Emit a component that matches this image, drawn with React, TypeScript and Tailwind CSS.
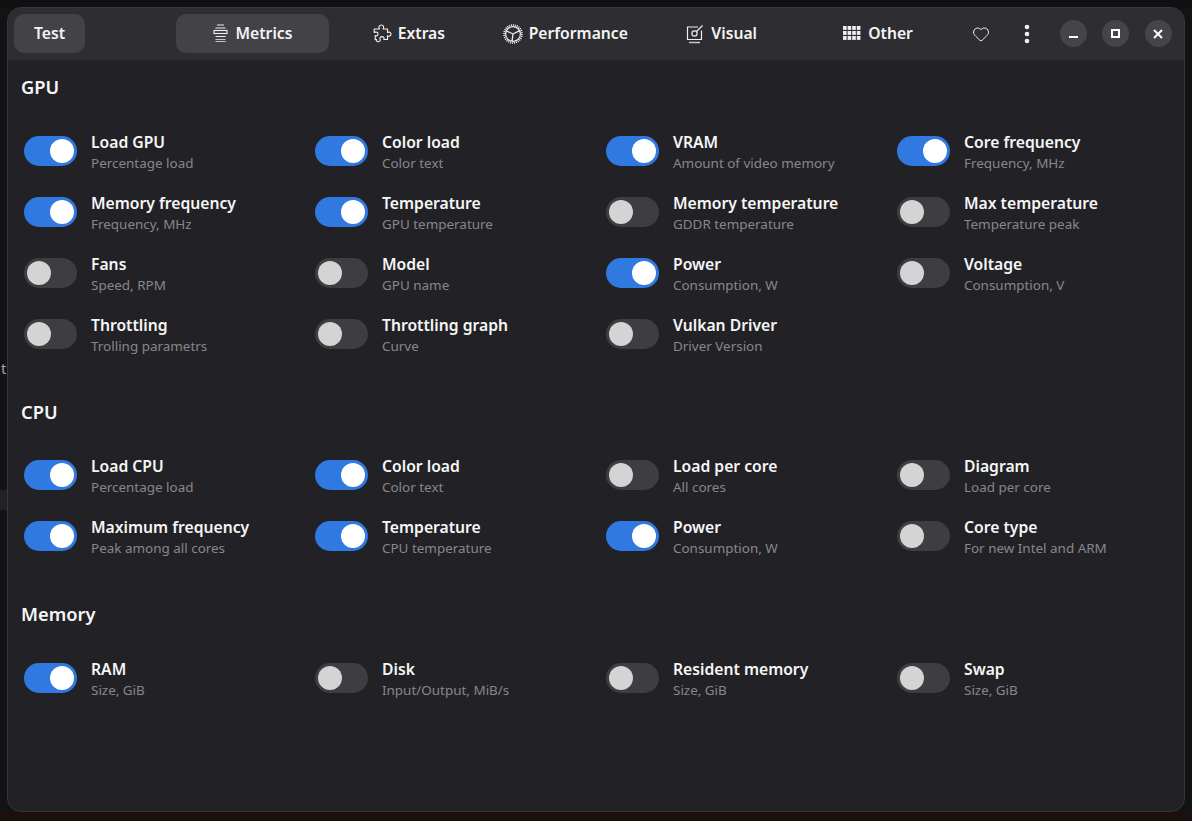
import { Heart } from "lucide-react";

type Item = { t: string; s: string; on?: boolean };

const gpu: Item[] = [
  { t: "Load GPU", s: "Percentage load", on: true },
  { t: "Color load", s: "Color text", on: true },
  { t: "VRAM", s: "Amount of video memory", on: true },
  { t: "Core frequency", s: "Frequency, MHz", on: true },
  { t: "Memory frequency", s: "Frequency, MHz", on: true },
  { t: "Temperature", s: "GPU temperature", on: true },
  { t: "Memory temperature", s: "GDDR temperature" },
  { t: "Max temperature", s: "Temperature peak" },
  { t: "Fans", s: "Speed, RPM" },
  { t: "Model", s: "GPU name" },
  { t: "Power", s: "Consumption, W", on: true },
  { t: "Voltage", s: "Consumption, V" },
  { t: "Throttling", s: "Trolling parametrs" },
  { t: "Throttling graph", s: "Curve" },
  { t: "Vulkan Driver", s: "Driver Version" },
];
const cpu: Item[] = [
  { t: "Load CPU", s: "Percentage load", on: true },
  { t: "Color load", s: "Color text", on: true },
  { t: "Load per core", s: "All cores" },
  { t: "Diagram", s: "Load per core" },
  { t: "Maximum frequency", s: "Peak among all cores", on: true },
  { t: "Temperature", s: "CPU temperature", on: true },
  { t: "Power", s: "Consumption, W", on: true },
  { t: "Core type", s: "For new Intel and ARM" },
];
const memory: Item[] = [
  { t: "RAM", s: "Size, GiB", on: true },
  { t: "Disk", s: "Input/Output, MiB/s" },
  { t: "Resident memory", s: "Size, GiB" },
  { t: "Swap", s: "Size, GiB" },
];

function Toggle({ on }: { on?: boolean }) {
  return on ? (
    <div className="flex h-[30px] w-[53px] shrink-0 items-center justify-end rounded-full bg-[#3079e0] pr-[3px]">
      <div className="h-[24px] w-[24px] rounded-full bg-white" />
    </div>
  ) : (
    <div className="flex h-[30px] w-[53px] shrink-0 items-center rounded-full bg-[#3e3e42] pl-[3px]">
      <div className="h-[24px] w-[24px] rounded-full bg-[#d4d4d4]" />
    </div>
  );
}

function Row({ t, s, on }: Item) {
  return (
    <div className="flex h-[61px] items-center">
      <Toggle on={on} />
      <div className="ml-[14px] flex flex-col pt-[4px]">
        <div className="text-[15.7px] leading-[21px] font-semibold whitespace-nowrap text-[#f6f6f6]">{t}</div>
        <div className="text-[13.45px] leading-[21px] whitespace-nowrap text-[#87878a]">{s}</div>
      </div>
    </div>
  );
}

function Section({ title, items, className }: { title: string; items: Item[]; className: string }) {
  return (
    <section className={className}>
      <h2 className="pl-[13px] text-[18.3px] leading-[26px] font-semibold text-[#f6f6f6]">{title}</h2>
      <div className="mt-[20px] grid grid-cols-[291px_291px_291px_291px] pl-[16px]">
        {items.map((i, n) => (
          <Row key={n} {...i} />
        ))}
      </div>
    </section>
  );
}

function MetricsIcon() {
  return (
    <svg width="15" height="19" viewBox="0 0 15 19" fill="none" stroke="#eeeeee" strokeWidth="1.1">
      <path d="M4 1h7M2.5 4h10" />
      <rect x="1" y="6.5" width="13" height="3" />
      <path d="M2.5 12.5h10" />
      <path d="M2.5 15.5h10M2.5 17.5h10" strokeOpacity="0.75" />
    </svg>
  );
}

function PuzzleIcon() {
  return (
    <svg width="19" height="19" viewBox="0 0 19 19" fill="none" stroke="#f0f0f0" strokeWidth="1.15" strokeLinejoin="round">
      <path d="M6.5 5C5.3 3.2 6.2 1 8.3 1s3 2.2 1.8 4H14.5V8.6C16 7.6 18 8.3 18 10.2S16 12.8 14.5 11.8V15.5H10.8C11.6 14 10.6 12.6 9 12.6S6.4 14 7.2 15.5C7.6 17.2 6 18 4.6 17.6S2.8 16 3.6 15.5H2.2V11.6C3.6 12.4 5 11.6 5 10S3.6 7.6 1.2 8.4V5Z" />
    </svg>
  );
}

function PerfIcon() {
  return (
    <svg width="20" height="20" viewBox="0 0 20 20" fill="none" stroke="#f0f0f0">
      <circle cx="10" cy="10" r="9" strokeWidth="1.6" strokeDasharray="1.1 0.9" />
      <circle cx="10" cy="10" r="7.4" strokeWidth="1.2" />
      <path d="M10 10 3.6 7M10 10l6.6-3.4M10 10l-1 7.2" strokeWidth="1.3" />
    </svg>
  );
}

function VisualIcon() {
  return (
    <svg width="19" height="20" viewBox="0 0 19 20" fill="none" stroke="#eeeeee" strokeWidth="1.2">
      <path d="M12 3H1.5v12.5h14V6.5" />
      <circle cx="8.5" cy="9.5" r="2.6" />
      <path d="M10.5 7.5 16.5 1.5" />
      <path d="M3 18.5h11" strokeWidth="1.6" strokeOpacity="0.8" />
    </svg>
  );
}

function GridIcon() {
  const cells = [0, 1, 2, 3].flatMap((x) => [0, 1, 2].map((y) => [x, y]));
  return (
    <svg width="18" height="15" viewBox="0 0 18 15" fill="#f0f0f0">
      {cells.map(([x, y]) => (
        <rect key={`${x}-${y}`} x={x * 4.6} y={y * 5} width="3.6" height="3.9" />
      ))}
    </svg>
  );
}

function Tab({ icon, label, active, gap }: { icon: React.ReactNode; label: string; active?: boolean; gap: string }) {
  return (
    <div
      className={`flex h-[39px] w-[153px] items-center justify-center rounded-[10px] text-[15.7px] font-semibold text-[#f4f4f4] ${gap} ${
        active ? "bg-[#434347]" : ""
      }`}
    >
      {icon}
      <span>{label}</span>
    </div>
  );
}

function WinButton({ children }: { children: React.ReactNode }) {
  return (
    <div className="flex h-[27px] w-[27px] items-center justify-center rounded-full bg-[#454549]">{children}</div>
  );
}

export default function App() {
  return (
    <div
      className="relative h-[821px] w-[1192px] overflow-hidden bg-[#131316] p-[7px] pb-[9px]"
      style={{ fontFamily: '"Noto Sans", sans-serif' }}
    >
      <div className="absolute top-0 left-0 h-[7px] w-full bg-[#101011]" />
      <div className="absolute bottom-0 left-0 h-[9px] w-full bg-[#1c100e]" />
      <div className="absolute top-[357px] left-[1px] text-[15px] text-[#a0a0a4]">t</div>
      <div className="absolute top-[490px] left-0 h-[20px] w-[7px] bg-[#222226]" />

      <div className="relative flex h-[805px] flex-col overflow-hidden rounded-[14px] border border-[#38383c] bg-[#222226]">
        <header className="flex h-[52px] shrink-0 items-center bg-[#2e2e32] pb-[1px]">
          <div className="ml-[6px] flex h-[39px] w-[71px] items-center justify-center rounded-[10px] bg-[#434347] text-[15.7px] font-semibold text-[#f4f4f4]">
            Test
          </div>
          <div className="ml-[91px] flex gap-[3.4px]">
            <Tab active gap="gap-[8px]" icon={<MetricsIcon />} label="Metrics" />
            <Tab gap="gap-[6px]" icon={<PuzzleIcon />} label="Extras" />
            <Tab gap="gap-[6px]" icon={<PerfIcon />} label="Performance" />
            <Tab gap="gap-[6px]" icon={<VisualIcon />} label="Visual" />
            <Tab gap="gap-[7px]" icon={<GridIcon />} label="Other" />
          </div>
          <Heart className="ml-[17px]" size={18} strokeWidth={1.3} color="#f0f0f0" />
          <svg className="ml-[34px]" width="6" height="20" viewBox="0 0 6 20" fill="#f0f0f0">
            <circle cx="3" cy="3" r="2.3" />
            <circle cx="3" cy="10" r="2.3" />
            <circle cx="3" cy="17" r="2.3" />
          </svg>
          <div className="ml-[30px] flex gap-[15.5px]">
            <WinButton>
              <div className="mt-[6px] h-[2px] w-[9px] bg-white" />
            </WinButton>
            <WinButton>
              <div className="h-[9px] w-[9px] border-2 border-white" />
            </WinButton>
            <WinButton>
              <svg width="10" height="10" viewBox="0 0 10 10" stroke="white" strokeWidth="2">
                <path d="M1 1l8 8M9 1l-8 8" />
              </svg>
            </WinButton>
          </div>
        </header>
        <main className="flex flex-col">
          <Section className="pt-[14px]" title="GPU" items={gpu} />
          <Section className="mt-[34.5px]" title="CPU" items={cpu} />
          <Section className="mt-[34.5px]" title="Memory" items={memory} />
        </main>
      </div>
    </div>
  );
}
